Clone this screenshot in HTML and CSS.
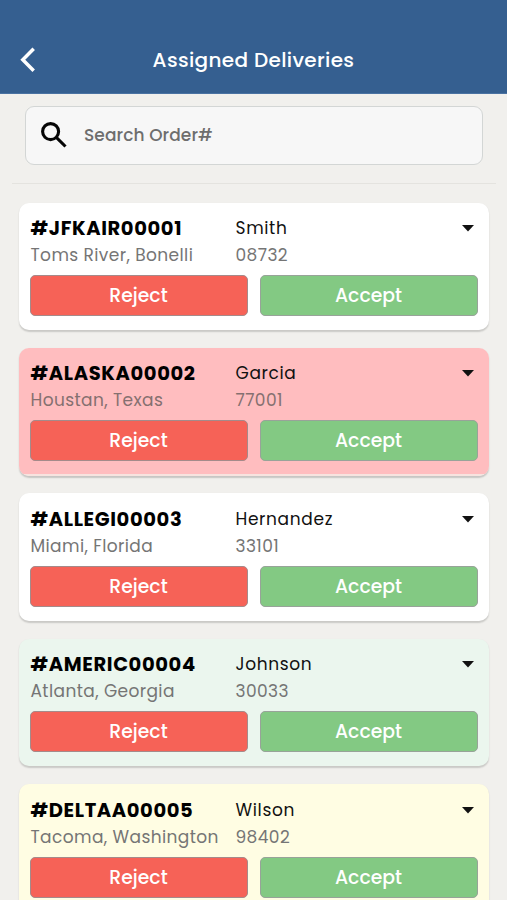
FILE: index.html
```
<!DOCTYPE html>
<html lang="en">
<head>
<meta charset="utf-8">
<title>Assigned Deliveries</title>
<link rel="stylesheet" href="styles.css">
</head>
<body>
<header class="topbar">
  <svg class="back" viewBox="0 0 16 26" aria-hidden="true"><path d="M13.7 1.8 2.8 12.8l10.9 10.9"/></svg>
  <h1 class="title">Assigned Deliveries</h1>
</header>
<main>
  <div class="search-area">
    <div class="search">
      <svg class="search-icon" viewBox="0 0 26 26" aria-hidden="true"><circle cx="9.6" cy="9.6" r="8"/><path d="m15.3 15.3 9.2 9.2"/></svg>
      <span class="placeholder">Search Order#</span>
    </div>
  </div>
  <div class="list">
    <article class="card">
      <div class="info">
        <div class="order">#JFKAIR00001</div>
        <div class="name">Smith</div>
        <svg class="caret" viewBox="0 0 12 7"><path d="M0 0h12L6 6.5z"/></svg>
        <div class="place">Toms River, Bonelli</div>
        <div class="zip">08732</div>
      </div>
      <div class="actions"><button class="btn reject">Reject</button><button class="btn accept">Accept</button></div>
    </article>
    <article class="card pink">
      <div class="info">
        <div class="order">#ALASKA00002</div>
        <div class="name">Garcia</div>
        <svg class="caret" viewBox="0 0 12 7"><path d="M0 0h12L6 6.5z"/></svg>
        <div class="place">Houstan, Texas</div>
        <div class="zip">77001</div>
      </div>
      <div class="actions"><button class="btn reject">Reject</button><button class="btn accept">Accept</button></div>
    </article>
    <article class="card">
      <div class="info">
        <div class="order">#ALLEGI00003</div>
        <div class="name">Hernandez</div>
        <svg class="caret" viewBox="0 0 12 7"><path d="M0 0h12L6 6.5z"/></svg>
        <div class="place">Miami, Florida</div>
        <div class="zip">33101</div>
      </div>
      <div class="actions"><button class="btn reject">Reject</button><button class="btn accept">Accept</button></div>
    </article>
    <article class="card mint">
      <div class="info">
        <div class="order">#AMERIC00004</div>
        <div class="name">Johnson</div>
        <svg class="caret" viewBox="0 0 12 7"><path d="M0 0h12L6 6.5z"/></svg>
        <div class="place">Atlanta, Georgia</div>
        <div class="zip">30033</div>
      </div>
      <div class="actions"><button class="btn reject">Reject</button><button class="btn accept">Accept</button></div>
    </article>
    <article class="card cream">
      <div class="info">
        <div class="order">#DELTAA00005</div>
        <div class="name">Wilson</div>
        <svg class="caret" viewBox="0 0 12 7"><path d="M0 0h12L6 6.5z"/></svg>
        <div class="place">Tacoma, Washington</div>
        <div class="zip">98402</div>
      </div>
      <div class="actions"><button class="btn reject">Reject</button><button class="btn accept">Accept</button></div>
    </article>
  </div>
</main>
</body>
</html>
```
FILE: styles.css
```
* { box-sizing: border-box; }
body {
  margin: 0;
  height: 900px;
  overflow: hidden;
  background: #f1f0ed;
  font-family: Poppins, Inter, sans-serif;
  color: #111;
}
.topbar {
  height: 94px;
  padding: 26px 20px 0;
  display: grid;
  grid-template-columns: 16px 1fr 16px;
  align-items: center;
  background: #355f90;
  border-bottom: 1px solid #4a72a2;
}
.back { width: 16px; height: 26px; fill: none; stroke: #fff; stroke-width: 3.5; }
.title {
  margin: 0;
  padding-top: 1px;
  text-align: center;
  font-size: 20px;
  font-weight: 500;
  letter-spacing: .35px;
  color: #fff;
}
.search-area {
  margin: 0 11px 0 12px;
  padding: 12px 13px 0;
  height: 90px;
  border-bottom: 1px solid #e4e3df;
}
.search {
  height: 59px;
  padding: 0 0 1.5px 15px;
  display: flex;
  align-items: center;
  gap: 17px;
  background: #f7f7f7;
  border: 1px solid #d3d6d5;
  border-radius: 9px;
}
.search-icon { width: 26px; height: 26px; fill: none; stroke: #050505; stroke-width: 3.1; }
.placeholder { font-size: 17px; font-weight: 500; letter-spacing: .1px; color: #6e6e6e; }
.list { padding: 18.5px 18px 0 19px; display: grid; gap: 17.6px; }
.card {
  height: 127.8px;
  padding: 12.5px 11px 0;
  background: #fff;
  border-radius: 10px;
  box-shadow: 0 1.5px 1.5px rgba(0, 0, 0, .16);
}
.pink { background: linear-gradient(#ffbdbf 0 126px, #f7e3df 126px); box-shadow: 0 1.5px 1.5px rgba(0, 0, 0, .18); }
.mint { background: #ebf6ee; }
.cream { background: #fffde3; }
.info {
  padding-left: .5px;
  display: grid;
  grid-template-columns: 205px 1fr 12px;
  grid-template-rows: 27px 26px;
  align-items: center;
  white-space: nowrap;
}
.order { font-size: 19.5px; font-weight: 700; letter-spacing: .62px; color: #000; }
.name { font-size: 17px; letter-spacing: .65px; line-height: 25px; }
.caret { width: 12px; height: 7px; position: relative; left: -4px; fill: #111; }
.place, .zip { font-size: 17px; letter-spacing: .4px; color: #757575; }
.pink .place, .pink .zip { color: #857070; }
.actions { margin-top: 7px; display: grid; grid-template-columns: 1fr 1fr; gap: 12px; }
.btn {
  height: 41px;
  padding: 0 1px 0 0;
  border: 1px solid #a58a8a;
  border-radius: 5px;
  font: 500 18.8px Poppins, Inter, sans-serif;
  color: #fff;
}
.reject { background: #f66257; }
.accept { background: #83c983; border-color: #98a399; }
```
